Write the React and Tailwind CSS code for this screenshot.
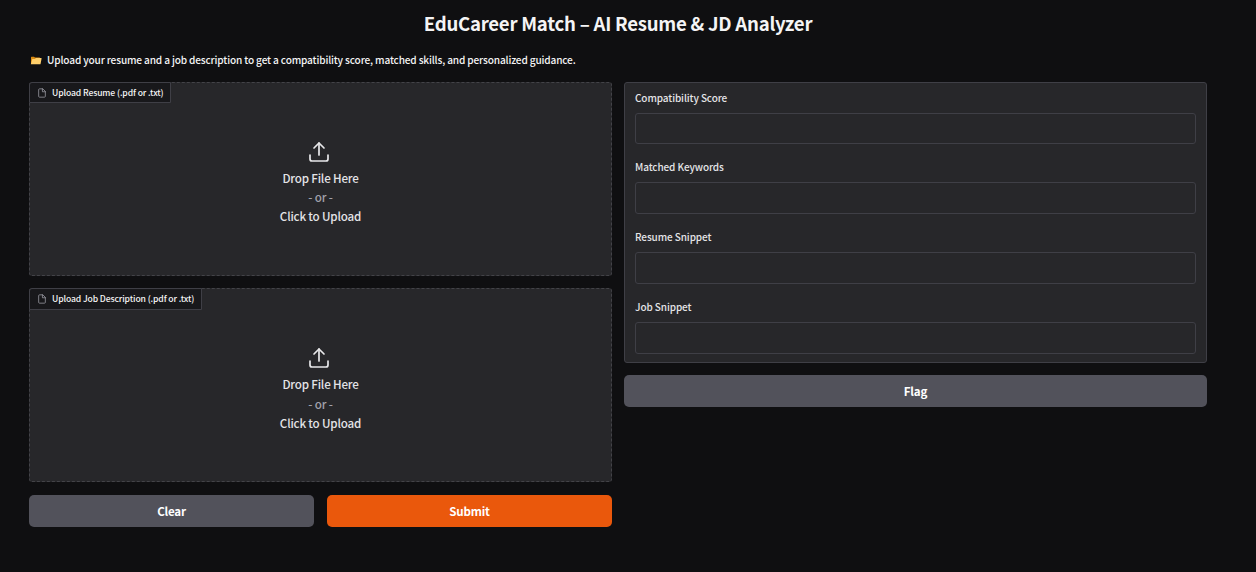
function FileIcon() {
  return (
    <svg className="h-[10px] w-[10px] shrink-0 text-[#a1a1aa]" viewBox="0 0 24 24" fill="none" stroke="currentColor" strokeWidth="1.8" strokeLinecap="round" strokeLinejoin="round">
      <path d="M13 2H6a2 2 0 0 0-2 2v16a2 2 0 0 0 2 2h12a2 2 0 0 0 2-2V9z" />
      <polyline points="13 2 13 9 20 9" />
    </svg>
  );
}

function UploadIcon() {
  return (
    <svg className="mr-[3px] h-6 w-6" viewBox="0 0 24 24" fill="none" stroke="#e8e8ea" strokeWidth="1.7" strokeLinecap="round" strokeLinejoin="round">
      <path d="M21 15v4a2 2 0 0 1-2 2H5a2 2 0 0 1-2-2v-4" />
      <polyline points="17 8 12 3 7 8" />
      <line x1="12" y1="3" x2="12" y2="15" />
    </svg>
  );
}

function FolderIcon() {
  return (
    <svg className="h-[9px] w-3 shrink-0" viewBox="0 0 12 9">
      <path d="M1 8V1.2Q1 .7 1.5.7H4l1 .9h4.5q.5 0 .5.5V8z" fill="#d98a12" />
      <path d="M.8 8.3 2.3 3H5l.9-.9h5.3q.5 0 .4.5l-1 5.2q-.1.5-.6.5z" fill="#ffcf6b" />
    </svg>
  );
}

function UploadBox({ label, tagClass, promptClass, orClass }) {
  return (
    <div className="flex h-[194px] flex-col items-start rounded-[3px] border border-dashed border-[#434348] bg-[#27272a]">
      <div className={`-mt-px -ml-px flex items-center gap-[6px] rounded-tl-[3px] border border-[#3f3f46] bg-[#18181b] pl-[7px] ${tagClass}`}>
        <FileIcon />
        <span className="-ml-px mb-[2px] whitespace-nowrap text-[8.6px] leading-[18px] font-medium tracking-[-0.11px] text-[#f4f4f5]">{label}</span>
      </div>
      <div className={`flex w-full flex-col items-center text-[11.6px] leading-[19px] font-medium tracking-[-0.17px] text-[#e4e4e7] ${promptClass}`}>
        <UploadIcon />
        <span className="mt-[5px]">Drop File Here</span>
        <span className={`text-[#a1a1aa] ${orClass}`}>- or -</span>
        <span>Click to Upload</span>
      </div>
    </div>
  );
}

function Field({ label, first = false }) {
  return (
    <label className={first ? "block h-[69px]" : "block h-[70px]"}>
      <span className="block h-[30px] text-[10px] leading-[30px] font-medium tracking-[-0.1px] text-[#e4e4e7]">{label}</span>
      <input className={`block w-full rounded-[3px] border border-[#3f3f46] bg-[#27272a] outline-none ${first ? "h-[31px]" : "h-8"}`} />
    </label>
  );
}

function Button({ children, tone = "bg-[#52525b]" }) {
  return (
    <button className={`h-8 flex-1 rounded-[5px] text-[11.6px] leading-8 font-bold tracking-[-0.2px] text-white ${tone}`}>{children}</button>
  );
}

export default function App() {
  return (
    <main className="h-[572px] w-full overflow-hidden bg-[#0f0f11] pr-[49px] pl-[29px] font-['Noto_Sans_CJK_SC',sans-serif]">
      <h1 className="h-[50px] pt-[9px] text-center text-[18.6px] leading-[28px] font-bold tracking-[-0.25px] text-[#f4f4f5]">
        EduCareer Match – AI Resume &amp; JD Analyzer
      </h1>
      <p className="flex h-8 items-start gap-[5px] pl-[1px] text-[10.1px] leading-5 font-medium tracking-[-0.15px] text-[#f4f4f5]">
        <span className="flex h-5 items-center"><FolderIcon /></span>
        <span>Upload your resume and a job description to get a compatibility score, matched skills, and personalized guidance.</span>
      </p>
      <div className="grid grid-cols-2 items-start gap-3">
        <section className="flex flex-col">
          <UploadBox label="Upload Resume (.pdf or .txt)" tagClass="h-[21px] w-[142px]" promptClass="pt-[37px]" orClass="" />
          <div className="mt-3">
            <UploadBox label="Upload Job Description (.pdf or .txt)" tagClass="h-[22px] w-[173px]" promptClass="pt-9" orClass="mt-px" />
          </div>
          <div className="mt-[13px] flex gap-[13px]">
            <Button>Clear</Button>
            <Button tone="bg-[#ea580c]">Submit</Button>
          </div>
        </section>
        <section className="flex flex-col gap-3">
          <div className="h-[281px] rounded-[3px] border border-[#3f3f46] bg-[#27272a] px-[10px]">
            <Field label="Compatibility Score" first />
            <Field label="Matched Keywords" />
            <Field label="Resume Snippet" />
            <Field label="Job Snippet" />
          </div>
          <div className="flex"><Button>Flag</Button></div>
        </section>
      </div>
    </main>
  );
}
